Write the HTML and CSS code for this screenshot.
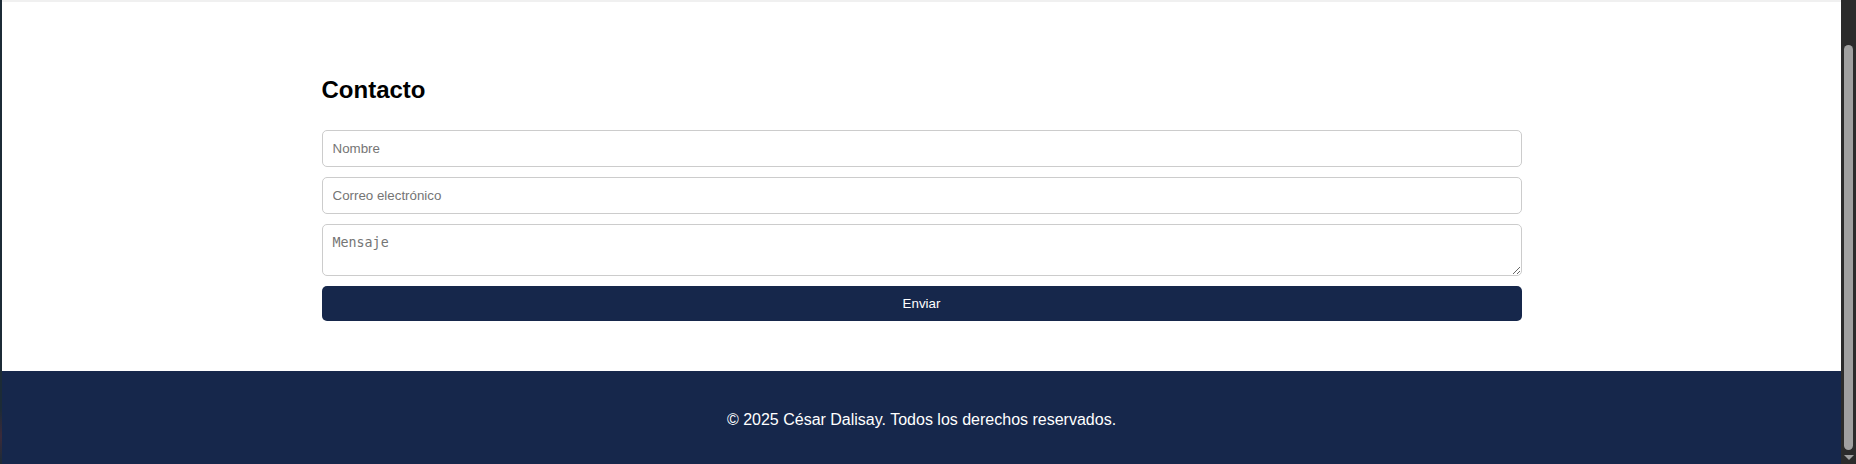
FILE: index.html
```html
<!DOCTYPE html>
<html lang="es">
<head>
<meta charset="utf-8">
<title>Contacto</title>
<link rel="stylesheet" href="styles.css">
</head>
<body>
  <div class="edge"></div>
  <div class="page">
    <div class="top-strip"></div>
    <section class="contact">
      <div class="container">
        <h2 class="contact-title">Contacto</h2>
        <form class="contact-form">
          <input class="field" type="text" placeholder="Nombre">
          <input class="field" type="email" placeholder="Correo electrónico">
          <textarea class="field field-area" rows="2" placeholder="Mensaje"></textarea>
          <button class="submit" type="button">Enviar</button>
        </form>
      </div>
    </section>
    <footer class="site-footer">
      <p class="footer-text">© 2025 César Dalisay. Todos los derechos reservados.</p>
    </footer>
  </div>
  <div class="scrollbar">
    <div class="scroll-space"></div>
    <div class="scroll-thumb"></div>
    <div class="scroll-arrow"></div>
  </div>
</body>
</html>
```
FILE: styles.css
```css
html, body {
  margin: 0;
  padding: 0;
  height: 464px;
  overflow: hidden;
}

body {
  display: flex;
  font-family: "Liberation Sans", Arial, sans-serif;
  background: #ffffff;
}

.edge {
  width: 2px;
  flex: none;
  background: linear-gradient(#1c2b36 0%, #1c2b36 88%, #3a2a3a 94%, #1c2b36 100%);
}

.page {
  flex: 1;
  min-width: 0;
  display: flex;
  flex-direction: column;
  overflow: hidden;
}

.top-strip {
  height: 2px;
  background: #f0f0f0;
  flex: none;
}

.contact {
  background: #ffffff;
  padding: 74px 0 50px;
  flex: none;
}

.container {
  width: 1200px;
  margin: 0 auto;
}

.contact-title {
  margin: 0 0 26px;
  font-size: 24px;
  font-weight: bold;
  color: #000000;
}

.contact-form {
  display: flex;
  flex-direction: column;
  gap: 10px;
}

.field {
  box-sizing: border-box;
  width: 100%;
  margin: 0;
  padding: 10px;
  border: 1px solid #cccccc;
  border-radius: 5px;
  font-family: "Liberation Sans", Arial, sans-serif;
  font-size: 13.333px;
  color: #000;
  background: #fff;
}

.field::placeholder {
  color: #757575;
}

.field-area {
  font-family: "DejaVu Sans Mono", monospace;
  height: 52px;
  display: block;
}

.submit {
  width: 100%;
  margin: 0;
  padding: 10px;
  border: none;
  border-radius: 5px;
  background: #16274b;
  color: #ffffff;
  font-family: "Liberation Sans", Arial, sans-serif;
  font-size: 13.333px;
  line-height: 15px;
}

.site-footer {
  background: #16274b;
  padding: 40px 0;
  text-align: center;
  flex: none;
}

.footer-text {
  margin: 0;
  color: #ffffff;
  font-size: 16px;
}

.scrollbar {
  width: 15px;
  flex: none;
  background: #2b2b2b;
  display: flex;
  flex-direction: column;
  align-items: center;
}

.scroll-space {
  height: 45px;
  flex: none;
}

.scroll-thumb {
  width: 9px;
  height: 405px;
  border-radius: 5px;
  background: #a0a0a0;
  flex: none;
}

.scroll-arrow {
  margin-top: 5px;
  width: 0;
  height: 0;
  border-left: 5px solid transparent;
  border-right: 5px solid transparent;
  border-top: 5px solid #a0a0a0;
}
```
